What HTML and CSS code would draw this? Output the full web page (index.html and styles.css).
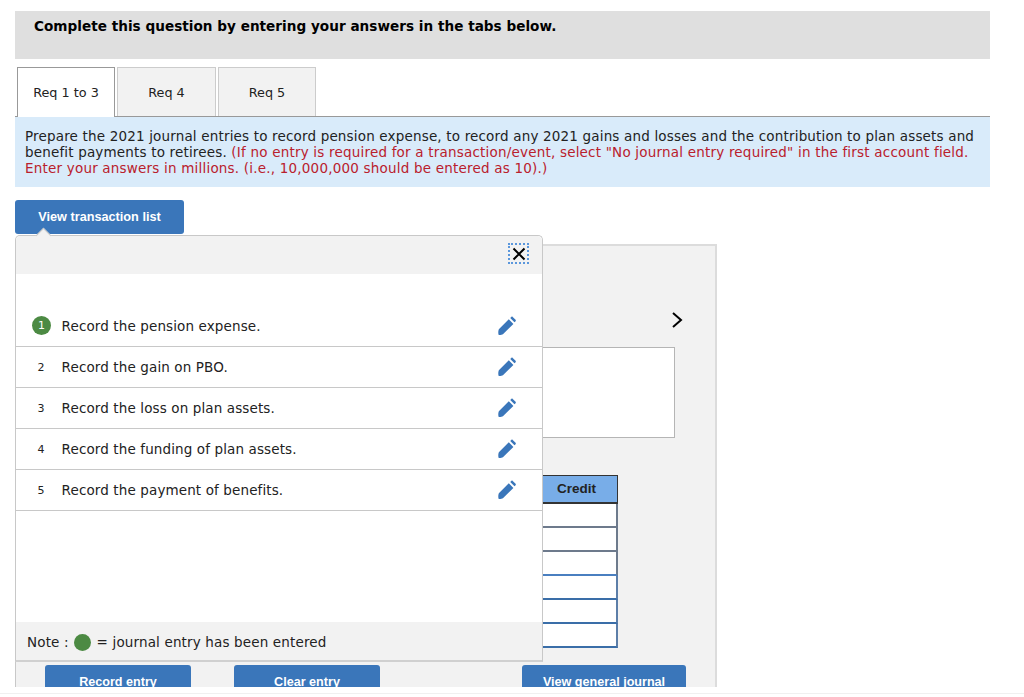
FILE: index.html
```html
<!DOCTYPE html>
<html lang="en">
<head>
<meta charset="utf-8">
<title>Journal entries</title>
<link rel="stylesheet" href="styles.css">
</head>
<body>
<div class="page">
  <div class="banner">Complete this question by entering your answers in the tabs below.</div>
  <div class="tabs">
    <div class="tab active">Req 1 to 3</div>
    <div class="tab wide">Req 4</div>
    <div class="tab">Req 5</div>
  </div>
  <div class="instructions">Prepare the 2021 journal entries to record pension expense, to record any 2021 gains and losses and the contribution to plan assets and benefit payments to retirees. <span class="red">(If no entry is required for a transaction/event, select "No journal entry required" in the first account field. Enter your answers in millions. (i.e., 10,000,000 should be entered as 10).)</span></div>
  <button class="btn view-list">View transaction list</button>
  <div class="panel">
    <div class="chevron-row">
      <svg class="chevron" width="12" height="16" viewBox="0 0 12 16"><path d="M2 1l8 7-8 7" fill="none" stroke="#000" stroke-width="2"/></svg>
    </div>
    <div class="entry-box"></div>
    <div class="grid-wrap">
      <div class="grid">
        <div class="grid-head">Credit</div>
        <div class="grid-cell"></div>
        <div class="grid-cell"></div>
        <div class="grid-cell"></div>
        <div class="grid-cell blue"></div>
        <div class="grid-cell blue"></div>
        <div class="grid-cell blue"></div>
      </div>
    </div>
    <div class="actions">
      <button class="btn record">Record entry</button>
      <button class="btn clear">Clear entry</button>
      <button class="btn journal">View general journal</button>
    </div>
  </div>

  <div class="popup">
    <div class="pointer"></div>
    <div class="popup-head">
      <span class="close"><svg width="14" height="14" viewBox="0 0 14 14"><path d="M1.5 1.5l11 11M12.5 1.5l-11 11" stroke="#000" stroke-width="2" fill="none"/></svg></span>
    </div>
    <div class="list">
      <div class="row">
        <span class="num done">1</span><span class="label">Record the pension expense.</span>
        <svg class="pencil" width="20" height="20" viewBox="0 0 20 20"><use href="#pen"/></svg>
      </div>
      <div class="row">
        <span class="num">2</span><span class="label">Record the gain on PBO.</span>
        <svg class="pencil" width="20" height="20" viewBox="0 0 20 20"><use href="#pen"/></svg>
      </div>
      <div class="row">
        <span class="num">3</span><span class="label">Record the loss on plan assets.</span>
        <svg class="pencil" width="20" height="20" viewBox="0 0 20 20"><use href="#pen"/></svg>
      </div>
      <div class="row">
        <span class="num">4</span><span class="label">Record the funding of plan assets.</span>
        <svg class="pencil" width="20" height="20" viewBox="0 0 20 20"><use href="#pen"/></svg>
      </div>
      <div class="row">
        <span class="num">5</span><span class="label">Record the payment of benefits.</span>
        <svg class="pencil" width="20" height="20" viewBox="0 0 20 20"><use href="#pen"/></svg>
      </div>
    </div>
    <div class="note">Note : <span class="dot"></span> = journal entry has been entered</div>
  </div>
</div>
<div class="rule"></div>
<svg class="defs" width="0" height="0"><defs><g id="pen"><path d="M1.6 13.4L11.8 3.3l4.6 4.6L6.2 18c-1.2.8-3.4 1.3-4.4 1-.6-1-.8-4 0-5.6z" fill="#3a76ba"/><path d="M13.2 2l1.1-1.1c.5-.4 1-.4 1.4 0l2.9 2.9c.4.4.4 1 0 1.4l-1.1 1.1z" fill="#3a76ba"/></g></defs></svg>
</body>
</html>
```
FILE: styles.css
```css
* { box-sizing: border-box; }
html, body { margin: 0; padding: 0; background: #fff; }
body { font-family: "DejaVu Sans", Verdana, sans-serif; color: #1a1a1a; font-size: 13px; overflow: hidden; height: 697px; }
.page { position: relative; height: 687px; overflow: hidden; padding: 11px 34px 0 15px; }
.banner { height: 48px; background: #dfdfdf; padding: 7px 19px; font-weight: 700; font-size: 13.6px; letter-spacing: .02px; line-height: 16px; color: #000; }
.tabs { display: flex; gap: 2px; margin-top: 8px; padding-left: 2px; border-bottom: 1px solid #999; height: 50px; }
.tab { width: 98px; height: 49px; background: #f2f2f2; border: 1px solid #ccc; border-bottom: 0; display: flex; align-items: center; justify-content: center; font-size: 12.8px; color: #222; }
.tab.wide { width: 99px; }
.tab.active { background: #fff; border: 1px solid #999; border-bottom: 0; height: 50px; position: relative; }
.instructions { background: #d9ebfa; padding: 11px 10px 9px; height: 70px; font-size: 13.5px; letter-spacing: .17px; line-height: 16.2px; color: #222; }
.red { color: #b9202c; letter-spacing: .2px; }
.btn { display: block; border: 0; border-radius: 3px; background: #3a76ba; color: #fff; font-family: "Liberation Sans", "DejaVu Sans", sans-serif; font-weight: 700; font-size: 12.7px; padding: 0; text-align: center; }
.view-list { width: 169px; height: 34px; margin-top: 13px; }
.panel { margin-top: 10px; width: 702px; height: 460px; background: #f2f2f2; border: 2px solid #dcdcdc; border-bottom: 0; border-left-color: #c8c8c8; border-left-width: 1px; position: relative; }
.chevron-row { display: flex; justify-content: flex-end; padding: 66px 32px 0 0; height: 101px; }
.chevron { display: block; }
.entry-box { height: 91px; margin-right: 40px; background: #fff; border: 1px solid #b5b5b5; }
.grid-wrap { display: flex; justify-content: flex-end; margin: 37px 97px 0 0; height: 173px; }
.grid { width: 200px; }
.grid-head { height: 29px; background: #78ade8; border: 1px solid #333; border-left: 0; border-bottom-width: 2px; font-family: "Liberation Sans", sans-serif; font-weight: 700; font-size: 13.5px; line-height: 25px; text-align: right; padding-right: 21px; color: #222; }
.grid-cell { height: 24px; background: #fff; border: 2px solid #6d7a8c; border-top-width: 0; border-left: 0; }
.grid-cell.blue { border-bottom-color: #3a6ea8; border-right-color: #5c7ea8; }
.grid-cell:nth-child(4) { border-bottom-color: #4a7fc0; }
.actions { display: flex; padding-left: 29px; margin-top: 17px; height: 30px; }
.actions .btn { height: 30px; padding-top: 3px; font-size: 12.6px; }
.record, .clear { width: 146px; }
.clear { margin-left: 43px; }
.journal { width: 164px; margin-left: 142px; }

.popup { position: absolute; left: 15px; top: 235px; width: 528px; height: 427px; background: #fff; border: 1px solid #c8c8c8; border-radius: 5px 5px 0 0; border-bottom-width: 2px; border-bottom-color: #d0d0d0; display: flex; flex-direction: column; }
.pointer { position: absolute; left: 22px; top: -6px; width: 11px; height: 11px; background: #f2f2f2; border-left: 1px solid #c8c8c8; border-top: 1px solid #c8c8c8; transform: rotate(45deg); }
.popup-head { height: 38px; background: #f2f2f2; border-radius: 5px 5px 0 0; display: flex; justify-content: flex-end; padding: 7px 13px 0 0; flex: none; }
.close { width: 21px; height: 21px; border: 2px dotted #5b97dc; display: flex; align-items: center; justify-content: center; }
.list { flex: 1; padding-top: 31px; }
.row { display: flex; align-items: center; height: 41px; border-bottom: 1px solid #c8c8c8; padding: 0 25px; }
.row:first-child { height: 42px; }
.num { width: 20px; font-size: 11px; text-align: center; flex: none; margin-left: -10px; margin-right: 10.6px; height: 19px; line-height: 19px; border-radius: 50%; color: #222; }
.num.done { background: #4c8a43; color: #fff; width: 19px; margin-left: -9px; margin-right: 10.6px; }
.label { flex: 1; font-size: 13.5px; letter-spacing: .12px; color: #222; }
.pencil { flex: none; }
.note { height: 38px; background: #f2f2f2; flex: none; font-size: 13.5px; letter-spacing: .15px; padding: 12px 11px 0; line-height: 16px; color: #222; }
.dot { display: inline-block; width: 17px; height: 17px; border-radius: 50%; background: #4c8a43; vertical-align: -4px; margin: 0 1px; }
.rule { height: 1px; margin-top: 6px; background: #f0f0f0; }
.defs { position: absolute; }
```
